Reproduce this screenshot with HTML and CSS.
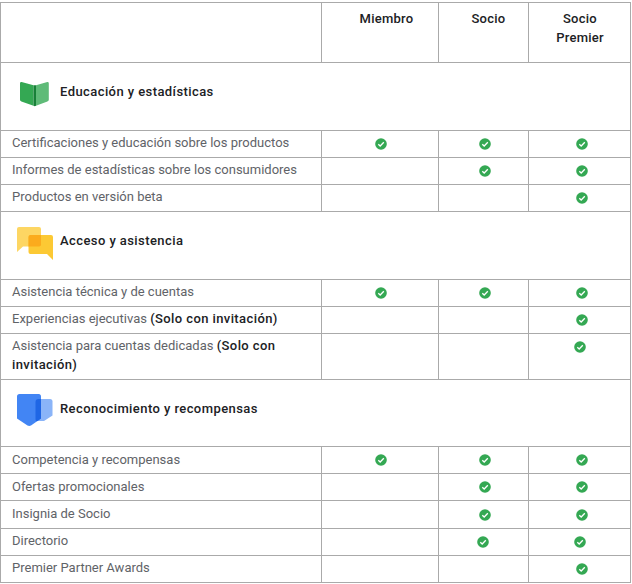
FILE: index.html
```html
<!DOCTYPE html>
<html lang="es">
<head>
<meta charset="utf-8">
<title>Niveles de socio</title>
<link rel="stylesheet" href="styles.css">
</head>
<body>
<svg class="defs" width="0" height="0" aria-hidden="true">
  <symbol id="check" viewBox="0 0 12 12">
    <circle cx="6" cy="6" r="5.8" fill="#34a853"/>
    <path d="M3.3 6.2 5.2 8 8.8 4.3" fill="none" stroke="#fff" stroke-width="1.3"/>
  </symbol>
</svg>
<table class="plans">
  <colgroup><col class="c1"><col class="c2"><col class="c3"><col class="c4"></colgroup>
  <tr class="head">
    <th></th>
    <th class="miembro">Miembro</th>
    <th class="socio">Socio</th>
    <th class="premier">Socio<br>Premier</th>
  </tr>
  <tr class="section s1">
    <td colspan="4"><div class="title">
      <svg class="ico-book" width="29" height="25" viewBox="0 0 29 25">
        <path d="M13.5 3.3 1.6.1C.7-.1 0 .5 0 1.4V17.6c0 1 .5 1.600 1.400 1.900L13.500 23.800Z" fill="#34a853"/>
        <path d="M16 3.300 27.300.1C28.200-.1 28.800.5 28.800 1.400V17.600c0 1-.5 1.600-1.400 1.900L16 23.800Z" fill="#5fbb78"/>
        <path d="M13.500 3.300H16V23.800L14.700 24.200 13.500 23.800Z" fill="#188038"/>
      </svg>
      <span>Educación y estadísticas</span>
    </div></td>
  </tr>
  <tr>
    <td class="label">Certificaciones y educación sobre los productos</td>
    <td class="tick"><svg class="ok"><use href="#check"/></svg></td>
    <td class="tick"><svg class="ok"><use href="#check"/></svg></td>
    <td class="tick"><svg class="ok"><use href="#check"/></svg></td>
  </tr>
  <tr>
    <td class="label">Informes de estadísticas sobre los consumidores</td>
    <td class="tick"></td>
    <td class="tick"><svg class="ok"><use href="#check"/></svg></td>
    <td class="tick"><svg class="ok"><use href="#check"/></svg></td>
  </tr>
  <tr>
    <td class="label">Productos en versión beta</td>
    <td class="tick"></td>
    <td class="tick"></td>
    <td class="tick"><svg class="ok"><use href="#check"/></svg></td>
  </tr>
  <tr class="section s2">
    <td colspan="4"><div class="title">
      <svg class="ico-chat" width="36" height="33" viewBox="0 0 36 33">
        <path d="M2 0H22A2 2 0 0 1 24 2V17A2 2 0 0 1 22 19.500H6L0 25V2A2 2 0 0 1 2 0Z" fill="#fdd663"/>
        <path d="M13 8H34A2 2 0 0 1 36 10V33L30 27H13A2 2 0 0 1 11.500 25V10A2 2 0 0 1 13 8Z" fill="#fcc934"/>
        <path d="M13 8H24V17A2 2 0 0 1 22 19.500H11.500V10A2 2 0 0 1 13 8Z" fill="#fbab1d"/>
      </svg>
      <span>Acceso y asistencia</span>
    </div></td>
  </tr>
  <tr>
    <td class="label">Asistencia técnica y de cuentas</td>
    <td class="tick"><svg class="ok"><use href="#check"/></svg></td>
    <td class="tick"><svg class="ok"><use href="#check"/></svg></td>
    <td class="tick"><svg class="ok"><use href="#check"/></svg></td>
  </tr>
  <tr>
    <td class="label">Experiencias ejecutivas <b>(Solo con invitación)</b></td>
    <td class="tick"></td>
    <td class="tick"></td>
    <td class="tick"><svg class="ok"><use href="#check"/></svg></td>
  </tr>
  <tr>
    <td class="label">Asistencia para cuentas dedicadas <b>(Solo con invitación)</b></td>
    <td class="tick"></td>
    <td class="tick"></td>
    <td class="tick top"><svg class="ok plain"><use href="#check"/></svg></td>
  </tr>
  <tr class="section s3">
    <td colspan="4"><div class="title">
      <svg class="ico-shield" width="36" height="32" viewBox="0 0 36 32">
        <path d="M20 5H33A2.500 2.500 0 0 1 35.500 7.500V21.500L27 27H20Z" fill="#8ab4f8"/>
        <path d="M2.500 0H21A2.500 2.500 0 0 1 24 2.500V24.500L14 31.500C13 32 11.500 32 10.500 31.500L0 24.500V2.500A2.500 2.500 0 0 1 2.500 0Z" fill="#4285f4"/>
        <path d="M24 5V24.500L20 27.300A2 2 0 0 1 18.500 25V8A3 3 0 0 1 21.500 5Z" fill="#1f66e5"/>
      </svg>
      <span>Reconocimiento y recompensas</span>
    </div></td>
  </tr>
  <tr class="low">
    <td class="label">Competencia y recompensas</td>
    <td class="tick"><svg class="ok"><use href="#check"/></svg></td>
    <td class="tick"><svg class="ok"><use href="#check"/></svg></td>
    <td class="tick"><svg class="ok"><use href="#check"/></svg></td>
  </tr>
  <tr class="low">
    <td class="label">Ofertas promocionales</td>
    <td class="tick"></td>
    <td class="tick"><svg class="ok"><use href="#check"/></svg></td>
    <td class="tick"><svg class="ok"><use href="#check"/></svg></td>
  </tr>
  <tr class="low tall">
    <td class="label">Insignia de Socio</td>
    <td class="tick"></td>
    <td class="tick"><svg class="ok"><use href="#check"/></svg></td>
    <td class="tick"><svg class="ok"><use href="#check"/></svg></td>
  </tr>
  <tr>
    <td class="label">Directorio</td>
    <td class="tick"></td>
    <td class="tick"><svg class="ok plain"><use href="#check"/></svg></td>
    <td class="tick"><svg class="ok plain"><use href="#check"/></svg></td>
  </tr>
  <tr>
    <td class="label">Premier Partner Awards</td>
    <td class="tick"></td>
    <td class="tick"></td>
    <td class="tick"><svg class="ok"><use href="#check"/></svg></td>
  </tr>
</table>
</body>
</html>
```
FILE: styles.css
```css
html, body { margin: 0; padding: 0; background: #fff; }
body { padding-top: 2px; font-family: Roboto, "Liberation Sans", sans-serif; }
.defs { position: absolute; }
.plans {
  width: 630px;
  table-layout: fixed;
  border-collapse: collapse;
  font-size: 13px;
  line-height: 19px;
  color: #5f6368;
}
.c1 { width: 321px; }
.c2 { width: 117px; }
.c3 { width: 90px; }
.c4 { width: 102px; }
th, td { border: 1px solid #aaa; padding: 0; }
.head { height: 60px; }
.head th {
  vertical-align: top;
  padding-top: 6px;
  font-weight: 500;
  color: #202124;
  letter-spacing: .25px;
}
.miembro { padding-left: 13px; }
.socio { padding-left: 10px; }
.premier { padding-left: 1px; }
.section.s1 { height: 68px; }
.section.s2 { height: 68px; }
.section.s3 { height: 67px; }
.section td { vertical-align: top; }
.title {
  display: flex;
  align-items: flex-start;
  font-weight: 500;
  color: #202124;
  letter-spacing: .42px;
}
.s1 .title { padding: 19px 0 0 19px; gap: 11px; }
.s2 .title { padding: 15px 0 0 16px; gap: 7px; }
.s3 .title { padding: 14px 0 0 16px; gap: 7px; }
.s1 .title span { margin-top: 0; }
.s2 .title span { margin-top: 4px; }
.s3 .title span { margin-top: 5px; }
.label {
  height: 19px;
  padding: 2px 5px 5px 11px;
}
.low .label { padding: 3px 5px 4px 11px; }
.low.tall .label { padding-bottom: 5px; }
.label b { font-weight: 500; color: #202124; letter-spacing: .4px; }
.tick { text-align: center; vertical-align: middle; padding: 0 2px 2px 0; }
.tick:last-child { padding-right: 0; }
.tick.top { vertical-align: top; padding: 2px 0 0 0; }
.ok {
  display: inline-block;
  vertical-align: middle;
  width: 12px;
  height: 12px;
  margin-left: 4px;
}
.ok.plain { margin-left: 0; }
```
